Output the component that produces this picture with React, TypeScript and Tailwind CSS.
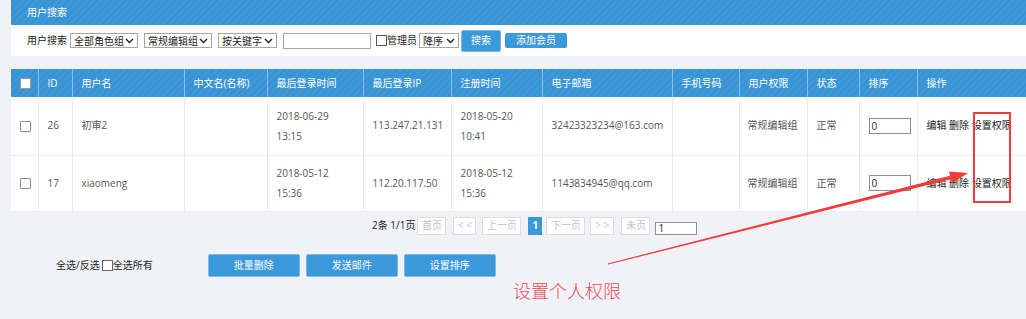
import React from "react";

const font = "font-['Open_Sans','Noto_Sans_CJK_SC',sans-serif]";

const rows = [
  {
    id: "26",
    name: "初审2",
    lastDate: "2018-06-29",
    lastTime: "13:15",
    ip: "113.247.21.131",
    regDate: "2018-05-20",
    regTime: "10:41",
    email: "32423323234@163.com",
  },
  {
    id: "17",
    name: "xiaomeng",
    lastDate: "2018-05-12",
    lastTime: "15:36",
    ip: "112.20.117.50",
    regDate: "2018-05-12",
    regTime: "15:36",
    email: "1143834945@qq.com",
  },
];

const headers = [
  "ID",
  "用户名",
  "中文名(名称)",
  "最后登录时间",
  "最后登录IP",
  "注册时间",
  "电子邮箱",
  "手机号码",
  "用户权限",
  "状态",
  "排序",
  "操作",
];

const widths = [27, 34, 112, 83, 96, 88, 91, 130, 67, 68, 52, 58, 109];

const Chevron = () => (
  <svg width="9" height="6" viewBox="0 0 9 6" className="shrink-0">
    <path d="M1 1 L4.5 4.5 L8 1" fill="none" stroke="#222" strokeWidth="1.4" />
  </svg>
);

const FakeSelect = ({ label, w }: { label: string; w: string }) => (
  <div
    className={`${w} h-[15px] flex items-center justify-between border border-[#a6a6a6] bg-white pl-[3px] pr-[3px] text-[10px] leading-none text-[#222]`}
  >
    <span>{label}</span>
    <Chevron />
  </div>
);

const Box = ({ className }: { className?: string }) => (
  <span
    className={`inline-block w-[11px] h-[11px] border border-[#8f8f8f] bg-white rounded-[1px] ${className ?? ""}`}
  />
);

const PageBtn = ({ label, w }: { label: string; w: string }) => (
  <div
    className={`${w} h-[18px] flex items-center justify-center border border-[#dddddd] bg-white text-[10px] text-[#c4c4c4]`}
  >
    {label}
  </div>
);

const BlueBtn = ({ label }: { label: string }) => (
  <div className="w-[92px] h-[23px] flex items-center justify-center rounded-[2px] bg-[#3a98db] border border-[#7db9e6] text-white text-[10px]">
    {label}
  </div>
);

const td =
  "px-[9px] text-[10px] text-[#555] border-r border-b border-[#ececec] align-middle whitespace-nowrap";

export default function App() {
  return (
    <div className={`relative w-[1026px] h-[319px] overflow-hidden bg-[#f1f2f7] pl-[11px] ${font}`}>
      {/* title bar */}
      <div className="h-[25px] flex items-center pl-[16px] text-[10px] text-white bg-[repeating-linear-gradient(-45deg,#3d98d7_0px,#3d98d7_3px,#3892d2_3px,#3892d2_5px)]">
        用户搜索
      </div>

      {/* search row */}
      <div className="h-[31px] bg-white flex items-center pl-[16px] text-[10px] text-[#222]">
        <span className="mr-[3px]">用户搜索</span>
        <FakeSelect label="全部角色组" w="w-[68px]" />
        <div className="w-[6px]" />
        <FakeSelect label="常规编辑组" w="w-[68px]" />
        <div className="w-[6px]" />
        <FakeSelect label="按关键字" w="w-[59px]" />
        <div className="w-[6px]" />
        <div className="w-[88px] h-[16px] border border-[#a6a6a6] bg-white" />
        <div className="w-[5px]" />
        <span className="w-[11px] h-[11px] border border-[#555] bg-white" />
        <span className="mr-[2px]">管理员</span>
        <FakeSelect label="降序" w="w-[40px]" />
        <div className="ml-[2px] w-[40px] h-[22px] flex items-center justify-center bg-[#3a98db] border border-[#7db9e6] rounded-[2px] text-white">
          搜索
        </div>
        <div className="ml-[4px] w-[62px] h-[15px] flex items-center justify-center bg-[#3a98db] rounded-[2px] text-white">
          添加会员
        </div>
      </div>

      {/* table */}
      <table className="mt-[13px] w-[1015px] table-fixed bg-white">
        <colgroup>
          {widths.map((w, i) => (
            <col key={i} style={{ width: w }} />
          ))}
        </colgroup>
        <thead>
          <tr className="h-[28px] bg-[repeating-linear-gradient(-45deg,#3d98d7_0px,#3d98d7_3px,#3892d2_3px,#3892d2_5px)]">
            <th className="border-r border-[#8cc0e8] pl-[9px] text-left">
              <span className="block w-[11px] h-[11px] bg-white border border-[#9a9a9a]" />
            </th>
            {headers.map((h, i) => (
              <th
                key={h}
                colSpan={i === headers.length - 1 ? 2 : 1}
                className={`px-[9px] text-left font-normal text-[10px] text-white whitespace-nowrap ${
                  i === headers.length - 1 ? "" : "border-r border-[#8cc0e8]"
                }`}
              >
                {h}
              </th>
            ))}
          </tr>
        </thead>
        <tbody>
          {rows.map((r, i) => (
            <tr key={r.id} className={i === 0 ? "h-[58px]" : "h-[56px]"}>
              <td className={`${td} pl-[9px]`}>
                <Box className="align-middle" />
              </td>
              <td className={td}>{r.id}</td>
              <td className={`${td} text-[#333]`}>{r.name}</td>
              <td className={td} />
              <td className={`${td} leading-[20px]`}>
                {r.lastDate}
                <br />
                {r.lastTime}
              </td>
              <td className={td}>{r.ip}</td>
              <td className={`${td} leading-[20px]`}>
                {r.regDate}
                <br />
                {r.regTime}
              </td>
              <td className={td}>{r.email}</td>
              <td className={td} />
              <td className={`${td} pl-[8px]`}>常规编辑组</td>
              <td className={td}>正常</td>
              <td className={td}>
                <div className="w-[42px] h-[16px] border border-[#8f8f8f] bg-white pl-[2px] text-[10px] leading-[14px] text-[#222]">
                  0
                </div>
              </td>
              <td colSpan={2} className="px-[9px] text-[10px] text-[#222] border-b border-[#ececec] whitespace-nowrap">
                编辑 删除 设置权限
              </td>
            </tr>
          ))}
        </tbody>
      </table>

      {/* pagination */}
      <div className="mt-[5px] h-[18px] flex items-center pl-[361px] text-[10px] text-[#222]">
        <span className="mr-[2px]">2条 1/1页</span>
        <PageBtn label="首页" w="w-[29px]" />
        <div className="w-[7px]" />
        <PageBtn label="< <" w="w-[23px]" />
        <div className="w-[6px]" />
        <PageBtn label="上一页" w="w-[39px]" />
        <div className="w-[7px]" />
        <div className="w-[14px] h-[18px] flex items-center justify-center bg-[#3a98db] text-white font-bold">1</div>
        <div className="w-[4px]" />
        <PageBtn label="下一页" w="w-[39px]" />
        <div className="w-[5px]" />
        <PageBtn label="> >" w="w-[24px]" />
        <div className="w-[7px]" />
        <PageBtn label="未页" w="w-[29px]" />
        <div className="w-[5px]" />
        <div className="w-[42px] h-[13px] mt-[5px] border border-[#8f8f8f] bg-white pl-[2px] text-[10px] leading-[11px]">
          1
        </div>
      </div>

      {/* bottom actions */}
      <div className="mt-[19px] h-[23px] flex items-center pl-[45px] text-[10px] text-[#222]">
        <span>全选/反选</span>
        <span className="ml-[2px] w-[11px] h-[11px] border border-[#666] bg-white" />
        <span>全选所有</span>
        <div className="ml-[55px] flex gap-[6px]">
          <BlueBtn label="批量删除" />
          <BlueBtn label="发送邮件" />
          <BlueBtn label="设置排序" />
        </div>
      </div>

      {/* annotation */}
      <div className="absolute left-[973px] top-[112px] w-[38px] h-[91px] border-2 border-[#f23a3a]" />
      <svg className="absolute left-0 top-0 pointer-events-none" width="1026" height="319">
        <polygon
          points="607.9,263.5 950.1,175.7 949,171.6 968,173 952,183.2 950.9,179.2 608.1,264.5"
          fill="#f33b3b"
        />
      </svg>
      <div className="absolute left-[513px] top-[278px] text-[18px] leading-[24px] text-[#ef4b54] font-['Noto_Sans_CJK_SC',sans-serif] font-light">
        设置个人权限
      </div>
    </div>
  );
}
